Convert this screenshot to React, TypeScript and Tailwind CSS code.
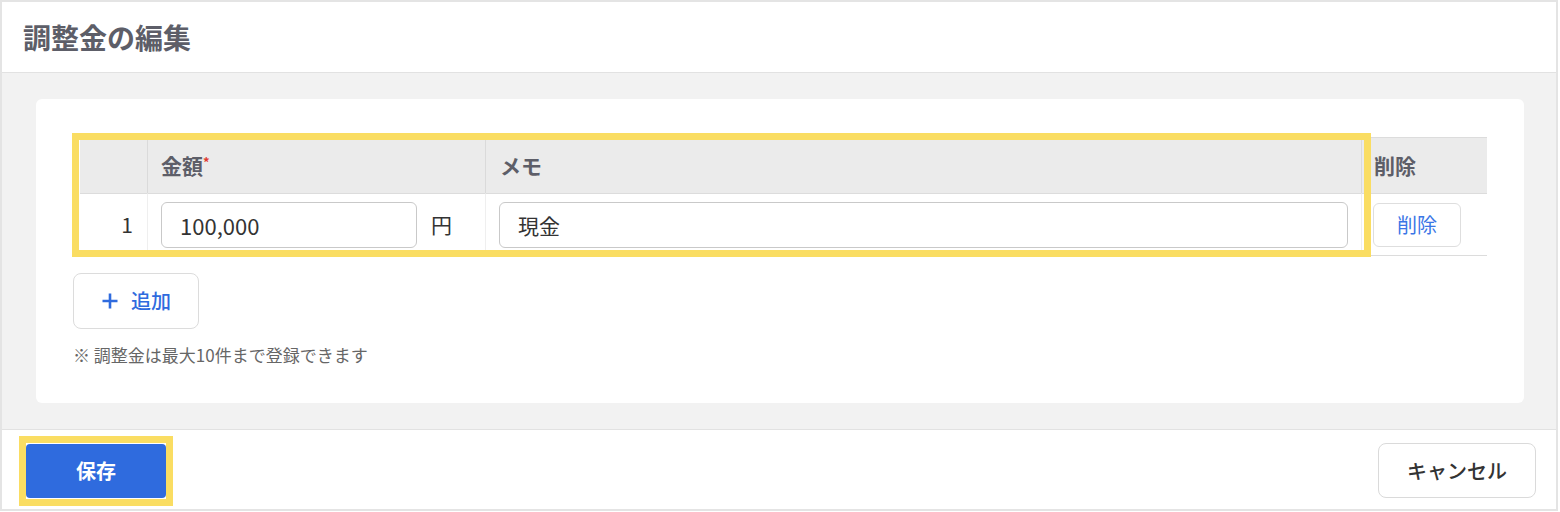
import * as React from "react";

const font = "font-['Noto_Sans_CJK_JP','Noto_Sans',sans-serif]";

const PlusIcon = () => (
    <svg width="18" height="18" viewBox="0 0 18 18" fill="none">
        <path d="M9 1.5v15M1.5 9h15" stroke="currentColor" strokeWidth="2.6" strokeLinecap="butt"/>
    </svg>
);

const App = () => {
    const [amount, setAmount] = React.useState<string>("100,000");
    const [memo, setMemo] = React.useState<string>("現金");

    return (
        <div className={`${font} w-[1558px] h-[511px] border-2 border-[#e4e4e4] bg-white flex flex-col`}>
            {/* header */}
            <div className="h-[71px] shrink-0 flex items-center pl-[21px] border-b border-[#e2e2e2]">
                <h1 className="text-[28px] font-bold text-[#5d5e68] leading-none">調整金の編集</h1>
            </div>

            {/* body */}
            <div className="h-[356px] shrink-0 bg-[#f2f2f2] pt-[26px] pl-[34px] pr-[32px]">
                <div className="h-[304px] bg-white rounded-[6px] px-[37px] pt-[38px]">
                    <div className="relative ml-[7px]">
                        <div className="grid grid-cols-[68px_338px_1fr_125px] border-t border-[#dcdcdc]">
                            <div className="h-[55px] bg-[#ebebeb] border-r border-[#dadada]"/>
                            <div className="h-[55px] bg-[#ebebeb] border-r border-[#dadada] flex items-center pl-[13px] text-[21px] font-bold text-[#5d5e68]">
                                金額<span className="text-[#e03a2f] text-[13px] self-start mt-[14px]">*</span>
                            </div>
                            <div className="h-[55px] bg-[#ebebeb] border-r border-[#dadada] flex items-center pl-[14px] text-[21px] font-bold text-[#5d5e68]">
                                メモ
                            </div>
                            <div className="h-[55px] bg-[#ebebeb] flex items-center pl-[12px] text-[21px] font-bold text-[#5d5e68]">
                                削除
                            </div>

                            <div className="h-[63px] border-t border-b border-[#dcdcdc] border-r border-r-[#efefef] flex items-center justify-end pr-[14px] text-[21px] text-[#333]">
                                1
                            </div>
                            <div className="h-[63px] border-t border-b border-[#dcdcdc] border-r border-r-[#efefef] flex items-center pl-[13px] gap-[14px]">
                                <input
                                    value={amount}
                                    onChange={(e) => setAmount(e.target.value)}
                                    className="w-[256px] h-[46px] border border-[#c9c9c9] rounded-[6px] pl-[18px] text-[22px] text-[#333] outline-none"
                                />
                                <span className="text-[21px] text-[#333]">円</span>
                            </div>
                            <div className="h-[63px] border-t border-b border-[#dcdcdc] border-r border-r-[#efefef] flex items-center pl-[13px] pr-[13px]">
                                <input
                                    value={memo}
                                    onChange={(e) => setMemo(e.target.value)}
                                    className="w-full h-[46px] border border-[#c9c9c9] rounded-[6px] pl-[18px] text-[21px] text-[#333] outline-none"
                                />
                            </div>
                            <div className="h-[63px] border-t border-b border-[#dcdcdc] flex items-center pl-[11px]">
                                <button className="w-[88px] h-[44px] border border-[#dedede] rounded-[6px] text-[20px] text-[#3a76e6]">
                                    削除
                                </button>
                            </div>
                        </div>

                        {/* highlight */}
                        <div className="absolute left-[-8px] top-[-4px] w-[1299px] h-[124px] border-[7px] border-[#fadd62] pointer-events-none"/>
                    </div>

                    <button className="mt-[17px] w-[126px] h-[56px] border border-[#dcdcdc] rounded-[8px] flex items-center justify-center gap-[12px] text-[20px] font-medium text-[#2f6bde]">
                        <PlusIcon/>
                        追加
                    </button>

                    <p className="mt-[15px] text-[17px] text-[#666] leading-[22px]">※ 調整金は最大10件まで登録できます</p>
                </div>
            </div>

            {/* footer */}
            <div className="flex-1 border-t border-[#e2e2e2] flex items-center justify-between pl-[24px] pr-[20px] pt-[2px]">
                <div className="relative">
                    <button className="w-[140px] h-[54px] bg-[#2f6bde] rounded-[4px] text-white text-[20px] font-bold">
                        保存
                    </button>
                    <div className="absolute left-[-7px] top-[-8px] right-[-7px] bottom-[-8px] border-[7px] border-[#fadd62] pointer-events-none"/>
                </div>
                <button className="w-[158px] h-[55px] border border-[#dadada] rounded-[8px] text-[20px] font-medium text-[#333]">
                    キャンセル
                </button>
            </div>
        </div>
    );
};

export default App;
